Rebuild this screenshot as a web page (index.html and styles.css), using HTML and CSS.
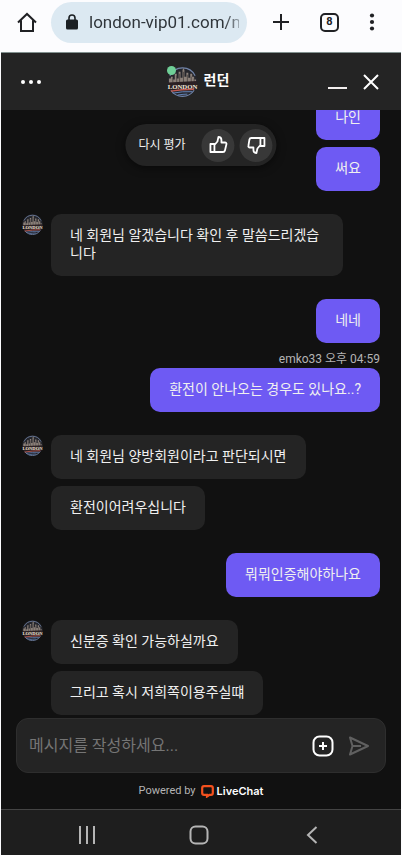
FILE: index.html
```html
<!DOCTYPE html>
<html lang="ko">
<head>
    <meta charset="UTF-8">
    <meta name="viewport" content="width=device-width, initial-scale=1.0">
    <title>런던</title>
    <link rel="stylesheet" href="styles.css">
</head>
<body>
    <!-- Avatar artwork, shared by the header and the messages -->
    <svg class="sprite" aria-hidden="true">
        <symbol id="avatar" viewBox="0 0 32 32">
            <circle cx="16" cy="16" r="15.5" fill="#25262c"/>
            <path d="M3 10a14.5 14.5 0 0 1 26 0M4 25a14.5 14.5 0 0 0 24 0" fill="none" stroke="#7184a8" stroke-width="1.2"/>
            <path d="M2 18v-5h2v-2h2v3h2V8h2v5h2V6h2v6h2V4l1-2 1 2v7h2V7h2v5h2V8h2v3h2v3h2v4z" fill="#8b8079"/>
            <path d="M6 12v5M10 10v7M13 8v9M17 6v11M21 9v8M25 11v6M28 13v4" stroke="#443e3d" stroke-width=".8"/>
            <path d="M1 17 31 15.500v8L3 25z" fill="#2b2023"/>
            <text x="16" y="23.500" text-anchor="middle" class="avatar-text">LONDON</text>
            <path d="M4 26q11-2 24-2" fill="none" stroke="#c25a50" stroke-width="1.3"/>
            <path d="M6 28q10-2 20-1.500M11 30q6-1 10-1" fill="none" stroke="#6687bd" stroke-width="1"/>
        </symbol>
    </svg>

    <div class="page">
        <div class="browser-bar">
            <button class="icon-btn" aria-label="홈">
                <svg width="20" height="21" viewBox="0 0 20 21" fill="none" stroke="#202124" stroke-width="2"><path d="M1 10.500 10 2l9 8.500M4 8.500V19h12V8.500"/></svg>
            </button>
            <div class="address">
                <svg width="12" height="16" viewBox="0 0 12 16"><path d="M3 7V4a3 3 0 0 1 6 0v3" fill="none" stroke="#1b2024" stroke-width="1.6"/><rect y="5.5" width="12" height="10" rx="1.5" fill="#1b2024"/></svg>
                <input class="address-input" type="text" aria-label="주소" value="london-vip01.com/m">
            </div>
            <div class="browser-actions">
                <button class="icon-btn" aria-label="새 탭">
                    <svg width="18" height="18" viewBox="0 0 18 18" stroke="#202124" stroke-width="2"><path d="M9 1v16M1 9h16"/></svg>
                </button>
                <button class="icon-btn tabs" aria-label="탭 8개">8</button>
                <button class="icon-btn" aria-label="더보기">
                    <svg width="6" height="18" viewBox="0 0 6 18" fill="#202124"><circle cx="3" cy="2.5" r="2.1"/><circle cx="3" cy="9" r="2.1"/><circle cx="3" cy="15.5" r="2.1"/></svg>
                </button>
            </div>
        </div>

        <header class="chat-header">
            <button class="icon-btn" aria-label="메뉴">
                <svg width="22" height="6" viewBox="0 0 22 6" fill="#fff"><circle cx="3" cy="3" r="2"/><circle cx="11" cy="3" r="2"/><circle cx="19" cy="3" r="2"/></svg>
            </button>
            <div class="agent">
                <div class="agent-photo">
                    <svg width="31" height="31"><use href="#avatar"/></svg>
                    <span class="online-dot"></span>
                </div>
                <h1 class="agent-name">런던</h1>
            </div>
            <div class="window-actions">
                <button class="icon-btn" aria-label="최소화">
                    <svg width="19" height="16" viewBox="0 0 19 16" stroke="#f2eeee" stroke-width="2"><path d="M0 14h19"/></svg>
                </button>
                <button class="icon-btn" aria-label="닫기">
                    <svg width="16" height="16" viewBox="0 0 16 16" stroke="#fff" stroke-width="2"><path d="m1 1 14 14M15 1 1 15"/></svg>
                </button>
            </div>
        </header>

        <main class="chat">
            <div class="rating">
                <span class="rating-label">다시 평가</span>
                <button class="rate-btn" aria-label="좋아요">
                    <svg width="20" height="20" viewBox="0 0 20 20" fill="none" stroke="#fff" stroke-width="1.8" stroke-linejoin="round"><path d="M2 9h4v8H2zM6 10l3-3.500L10 2c2 0 3 1 3 3v2.500h3.500c1.200 0 1.800.8 1.500 1.800l-1.500 6.200c-.2 1-1 1.500-2 1.500H6"/></svg>
                </button>
                <button class="rate-btn" aria-label="싫어요">
                    <svg width="20" height="20" viewBox="0 0 20 20" fill="none" stroke="#fff" stroke-width="1.8" stroke-linejoin="round"><path d="M18 11h-4V3h4zM14 10l-3 3.500L10 18c-2 0-3-1-3-3v-2.500H3.500c-1.200 0-1.800-.8-1.500-1.800l1-6.200C3.200 3.500 4 3 5 3H14"/></svg>
                </button>
            </div>

            <div class="messages">
                <div class="group group-user">
                    <p class="bubble">나인</p>
                    <p class="bubble">써요</p>
                </div>
                <div class="group">
                    <svg class="avatar" width="21" height="21"><use href="#avatar"/></svg>
                    <p class="bubble">네 회원님 알겠습니다 확인 후 말씀드리겠습니다</p>
                </div>
                <div class="group group-user">
                    <p class="bubble">네네</p>
                    <div class="message">
                        <span class="meta">emko33 오후 04:59</span>
                        <p class="bubble">환전이 안나오는 경우도 있나요..?</p>
                    </div>
                </div>
                <div class="group">
                    <svg class="avatar" width="21" height="21"><use href="#avatar"/></svg>
                    <p class="bubble">네 회원님 양방회원이라고 판단되시면</p>
                    <p class="bubble">환전이어려우십니다</p>
                </div>
                <div class="group group-user">
                    <p class="bubble">뭐뭐인증해야하나요</p>
                </div>
                <div class="group">
                    <svg class="avatar" width="21" height="21"><use href="#avatar"/></svg>
                    <p class="bubble">신분증 확인 가능하실까요</p>
                    <p class="bubble">그리고 혹시 저희쪽이용주실떄</p>
                </div>
            </div>

            <form class="composer">
                <input class="composer-input" type="text" aria-label="메시지" placeholder="메시지를 작성하세요...">
                <button class="icon-btn" type="button" aria-label="첨부">
                    <svg width="22" height="22" viewBox="0 0 22 22" fill="none" stroke="#fff" stroke-width="2"><rect x="1.5" y="1.5" width="19" height="19" rx="6"/><path d="M11 7v8M7 11h8"/></svg>
                </button>
                <button class="icon-btn" type="submit" aria-label="보내기">
                    <svg width="22" height="20" viewBox="0 0 22 20" fill="none" stroke="#606060" stroke-width="2" stroke-linejoin="round"><path d="M2 1.500 20 10 2 18.500 4.500 10zM4.500 10H13"/></svg>
                </button>
            </form>

            <footer class="powered">
                <span>Powered by</span>
                <a class="brand" href="#">
                    <svg width="13" height="13" viewBox="0 0 13 13"><path d="M3 1.200h7q1.800 0 1.800 1.800v5q0 1.800-1.800 1.800H8.500L6 11.500V9.800H3Q1.200 9.800 1.200 8V3Q1.200 1.200 3 1.200z" fill="none" stroke="#f4511e" stroke-width="2.2"/></svg>
                    LiveChat
                </a>
            </footer>
        </main>

        <nav class="system-nav">
            <button class="icon-btn" aria-label="최근 앱">
                <svg width="18" height="18" viewBox="0 0 18 18" stroke="#b5b5b5" stroke-width="2"><path d="M2 0v18M9 0v18M16 0v18"/></svg>
            </button>
            <button class="icon-btn" aria-label="홈 화면">
                <svg width="20" height="20" viewBox="0 0 20 20" fill="none" stroke="#b5b5b5" stroke-width="2"><rect x="1.5" y="1.5" width="17" height="17" rx="5"/></svg>
            </button>
            <button class="icon-btn" aria-label="뒤로">
                <svg width="12" height="18" viewBox="0 0 12 18" fill="none" stroke="#b5b5b5" stroke-width="2"><path d="M10.500 1 2 9l8.500 8"/></svg>
            </button>
        </nav>
    </div>
</body>
</html>
```

FILE: styles.css
```css
* {
    margin: 0;
    padding: 0;
    box-sizing: border-box;
}

body {
    font-family: Roboto, "Noto Sans CJK KR", sans-serif;
    font-size: 14px;
    line-height: 18px;
    background: #fcfcfe;
    color: #f0f0f0;
}

svg {
    display: block;
    flex: none;
}

input,
button {
    font: inherit;
    border: none;
    background: none;
    outline: none;
}

.sprite {
    position: absolute;
    width: 0;
    height: 0;
}

.page {
    height: 100vh;
    padding: 0 1px;
    display: flex;
    flex-direction: column;
}

.icon-btn {
    display: flex;
    align-items: center;
    justify-content: center;
    cursor: pointer;
}

/* Browser bar */
.browser-bar {
    display: flex;
    align-items: center;
    height: 53px;
    padding: 0 26px 8px 16px;
    border-bottom: 1px solid #82918f;
}

.address {
    flex: 1;
    min-width: 0;
    display: flex;
    align-items: center;
    gap: 11px;
    height: 41px;
    margin: 0 25px 0 14px;
    padding: 0 8px 0 15px;
    border-radius: 21px;
    background: #dce9f2;
}

.address-input {
    flex: 1;
    min-width: 0;
    width: 0;
    height: 24px;
    font-size: 17px;
    color: #30363b;
    -webkit-mask-image: linear-gradient(to right, #000 90%, rgba(0, 0, 0, 0.4));
    mask-image: linear-gradient(to right, #000 90%, rgba(0, 0, 0, 0.4));
}

.browser-actions {
    display: flex;
    align-items: center;
    gap: 30px;
}

.tabs {
    width: 19px;
    height: 19px;
    border: 2px solid #202124;
    border-radius: 5px;
    font-size: 11px;
    font-weight: 700;
    color: #202124;
}

/* Chat header */
.chat-header {
    display: flex;
    align-items: center;
    justify-content: space-between;
    height: 57px;
    padding: 0 22px 0 19px;
    background: #242424;
}

.window-actions {
    display: flex;
    gap: 16px;
}

.agent {
    flex: 1;
    display: flex;
    align-items: center;
    justify-content: center;
    gap: 6px;
    padding-left: 26px;
}

.agent-photo {
    position: relative;
}

.online-dot {
    position: absolute;
    top: 0;
    left: 0;
    width: 9px;
    height: 9px;
    border-radius: 50%;
    background: #6fcf97;
}

.agent-name {
    font-size: 14px;
    font-weight: 700;
    line-height: 22px;
    padding-bottom: 4px;
    color: #fff;
}

.avatar-text {
    font-family: "Liberation Serif", serif;
    font-size: 7px;
    font-weight: 700;
    fill: #f3e8dd;
}

/* Conversation */
.chat {
    position: relative;
    flex: 1;
    min-height: 0;
    display: flex;
    flex-direction: column;
    background: #111;
}

.messages {
    flex: 1;
    min-height: 0;
    display: flex;
    flex-direction: column;
    justify-content: flex-end;
    gap: 23px;
    padding: 0 21px 3px;
    overflow: hidden;
}

.rating {
    position: absolute;
    z-index: 1;
    top: 14px;
    left: 50%;
    transform: translateX(-50%);
    display: flex;
    align-items: center;
    gap: 5px;
    height: 42px;
    padding: 0 4px 0 13px;
    border-radius: 21px;
    background: #242424;
    box-shadow: 0 2px 8px rgba(0, 0, 0, 0.5);
}

.rating-label {
    margin-right: 11px;
    font-size: 12px;
    white-space: nowrap;
}

.rate-btn {
    display: flex;
    align-items: center;
    justify-content: center;
    width: 33px;
    height: 33px;
    border-radius: 50%;
    background: #383838;
    cursor: pointer;
}

.group {
    position: relative;
    display: flex;
    flex-direction: column;
    align-items: flex-start;
    gap: 7px;
    padding: 0 37px 0 29px;
}

.group-user {
    align-items: flex-end;
    padding-right: 0;
}

.avatar {
    position: absolute;
    top: 0;
    left: 0;
}

.message {
    display: flex;
    flex-direction: column;
    align-items: flex-end;
}

.meta {
    font-size: 12px;
    color: #b4b4b4;
}

.bubble {
    padding: 12px 19px 14px;
    border-radius: 10px;
    background: #242424;
}

.group-user .bubble {
    background: #6e5af3;
}

/* Composer */
.composer {
    display: flex;
    align-items: center;
    gap: 14px;
    height: 55px;
    margin: 0 15px;
    padding: 0 15px 0 12px;
    border: 1px solid #2e2e2e;
    border-radius: 12px;
    background: #242424;
}

.composer-input {
    flex: 1;
    min-width: 0;
    height: 24px;
    font-size: 16px;
    color: #f0f0f0;
}

.composer-input::placeholder {
    color: #757575;
    opacity: 1;
}

.powered {
    display: flex;
    align-items: center;
    justify-content: center;
    gap: 5px;
    height: 36px;
    font-size: 11px;
    color: #b4b4b4;
}

.brand {
    display: flex;
    align-items: center;
    gap: 3px;
    font-family: Inter, sans-serif;
    font-weight: 600;
    color: #fff;
    text-decoration: none;
}

/* System navigation */
.system-nav {
    display: flex;
    align-items: center;
    height: 46px;
    padding: 4px 33px 0 30px;
    border-top: 1px solid #444;
    background: #1e1e1e;
}

.system-nav .icon-btn {
    flex: 1;
}
```
